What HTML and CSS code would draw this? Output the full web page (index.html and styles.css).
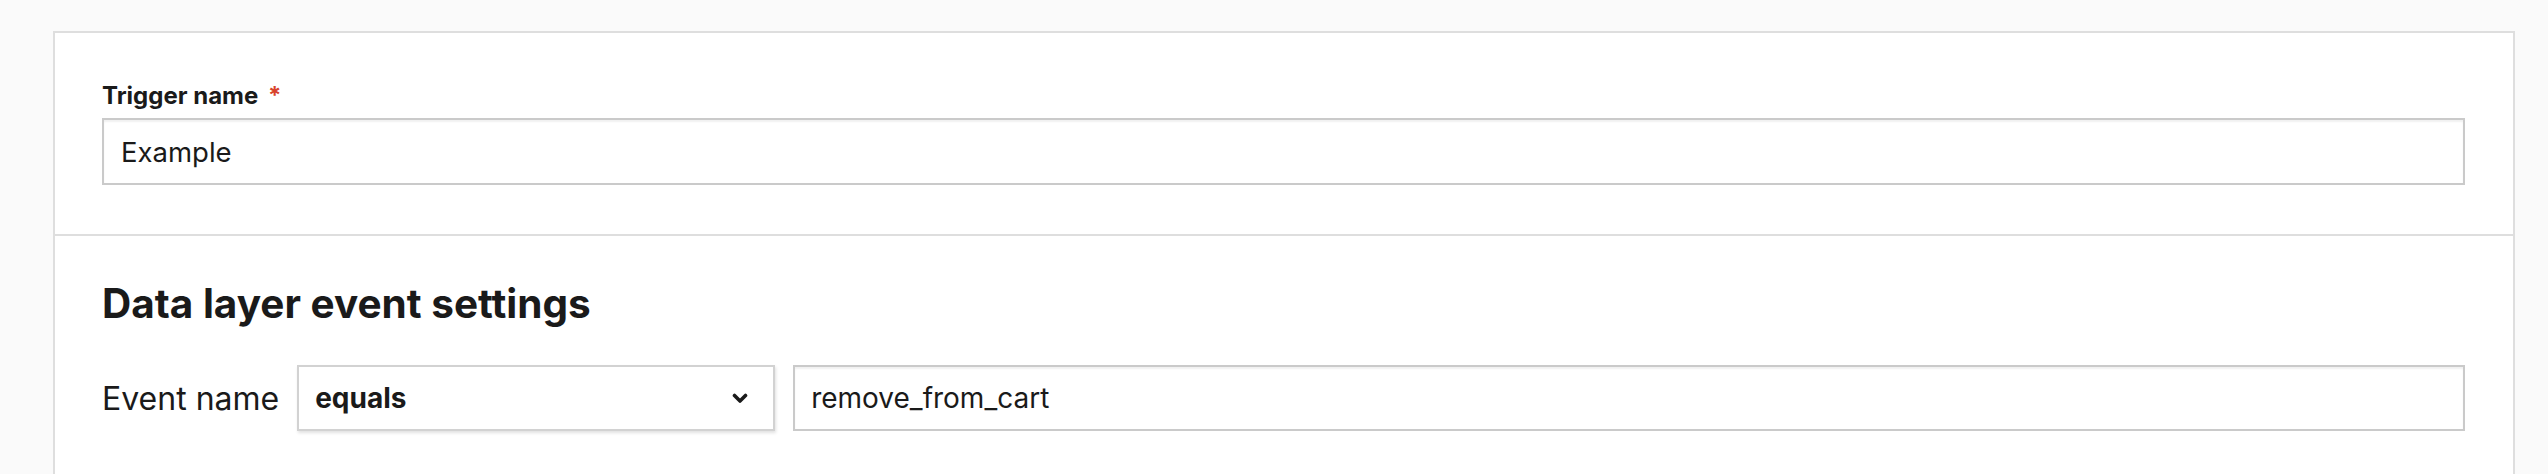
FILE: index.html
```html
<!DOCTYPE html>
<html lang="en">
<head>
    <meta charset="UTF-8">
    <meta name="viewport" content="width=device-width, initial-scale=1.0">
    <title>Trigger</title>
    <link rel="stylesheet" href="styles.css">
</head>
<body>
    <div class="card">
        <div class="section">
            <label class="field-label" for="triggerName">Trigger name <span class="required">*</span></label>
            <input class="text-input" id="triggerName" type="text" value="Example">
        </div>
        <div class="section section-settings">
            <h2 class="section-title">Data layer event settings</h2>
            <div class="event-row">
                <span class="event-label">Event name</span>
                <div class="select-box">
                    <span class="select-value">equals</span>
                    <svg class="chevron" width="16" height="11" viewBox="0 0 16 11">
                        <path d="M2.5 2.5 L8 8 L13.5 2.5" fill="none" stroke="#1a1a1a" stroke-width="3.6" stroke-linecap="round" stroke-linejoin="round"/>
                    </svg>
                </div>
                <input class="text-input event-input" type="text" value="remove_from_cart">
            </div>
        </div>
    </div>
</body>
</html>
```

FILE: styles.css
```css
body {
    font-family: Inter, "Noto Sans", sans-serif;
    margin: 0;
    padding: 0;
    background-color: #fafafa;
    color: #1a1a1a;
}
.card {
    margin: 31px 33px 0 53px;
    background: #fff;
    border: 2px solid #dedede;
}
.section {
    padding: 48px 48px 49px 47px;
}
.section-settings {
    border-top: 2px solid #dedede;
    padding-top: 46px;
}
.field-label {
    display: block;
    font-size: 24px;
    line-height: 29px;
    font-weight: 700;
    margin-bottom: 8px;
}
.required {
    color: #d8432c;
    margin-left: 4px;
}
.text-input {
    display: block;
    box-sizing: border-box;
    width: 100%;
    height: 67px;
    padding: 0 17px;
    border: 2px solid #cacaca;
    box-shadow: inset 0 2px 2px rgba(0, 0, 0, 0.06);
    font-family: Inter, "Noto Sans", sans-serif;
    font-size: 27.5px;
    color: #1a1a1a;
    background: #fff;
    outline: none;
}
.section-title {
    font-size: 40.5px;
    line-height: 44px;
    font-weight: 700;
    margin: 0 0 39px;
}
.event-row {
    display: flex;
    align-items: center;
    gap: 18px;
}
.event-label {
    font-size: 32px;
}
.select-box {
    box-sizing: border-box;
    width: 478px;
    height: 66px;
    display: flex;
    align-items: center;
    justify-content: space-between;
    padding: 0 25px 0 16px;
    border: 2px solid #d2d2d2;
    box-shadow: 1px 2px 3px rgba(0, 0, 0, 0.12);
    background: #fff;
}
.select-value {
    font-size: 28px;
    font-weight: 700;
}
.event-input {
    flex: 1;
    width: auto;
    height: 66px;
    padding: 0 16px;
    font-size: 28px;
}
```
